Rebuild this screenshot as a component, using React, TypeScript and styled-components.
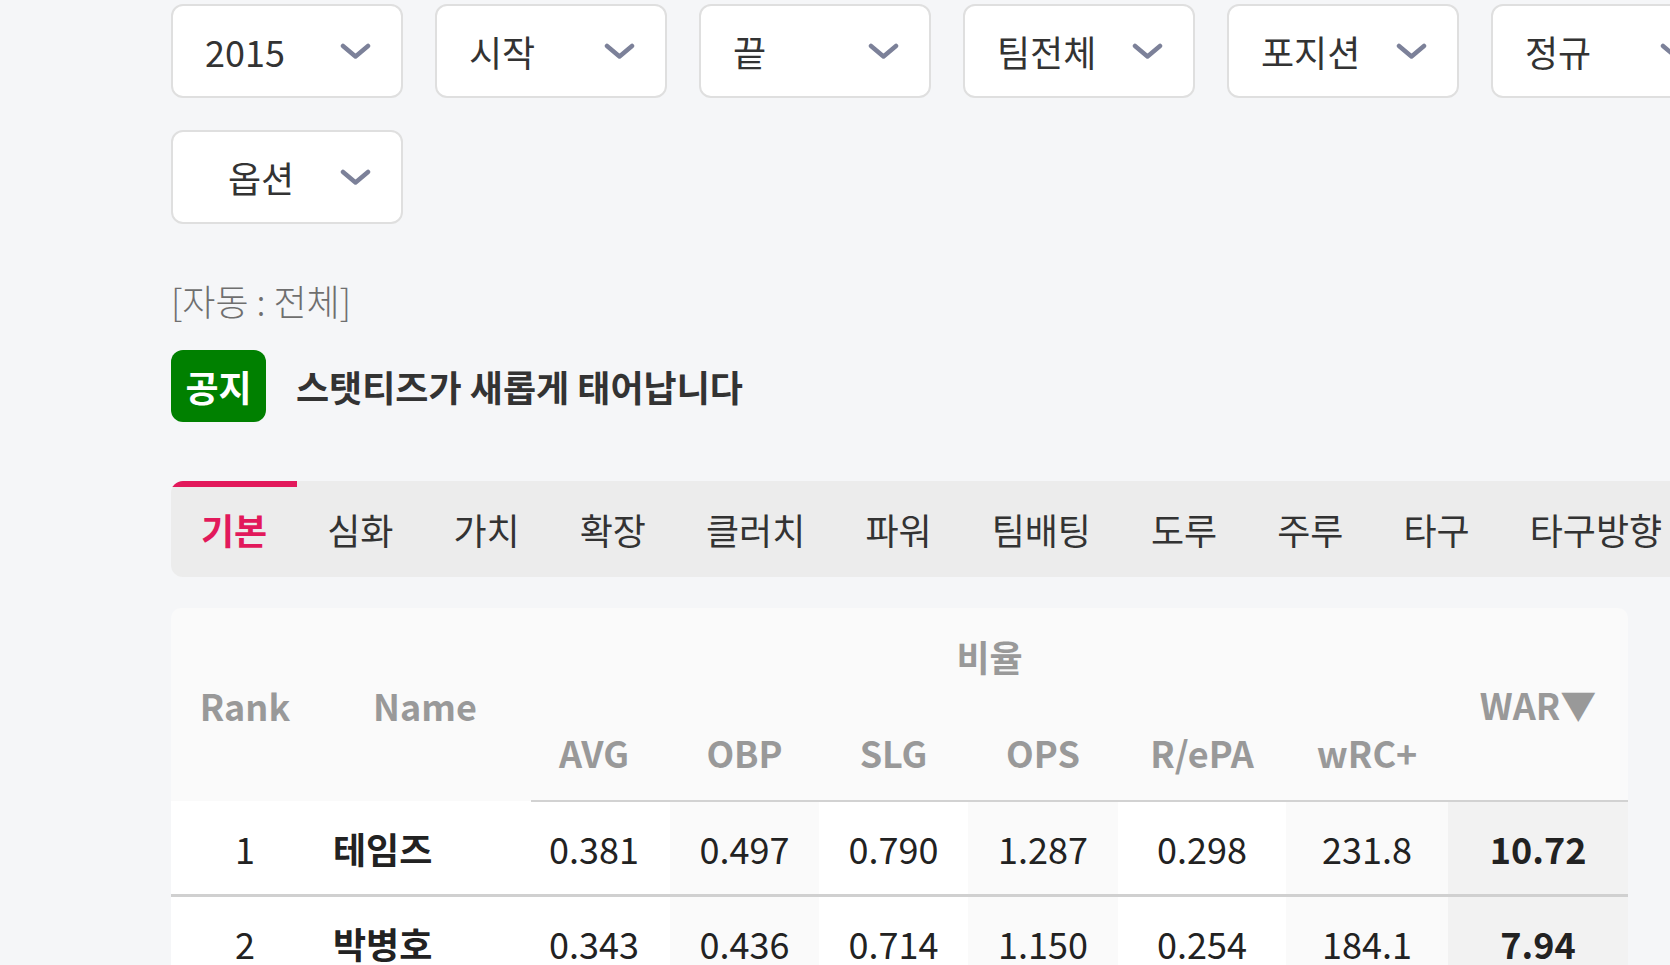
import React from "react";
import styled, { createGlobalStyle } from "styled-components";

const GlobalStyle = createGlobalStyle`
  html, body {
    margin: 0;
    padding: 0;
    background: #f5f6f8;
    overflow: hidden;
  }
  body {
    font-family: "Noto Sans CJK KR", "Noto Sans", sans-serif;
    color: #333;
  }
`;

const Page = styled.div`
  width: 1800px;
  padding: 4px 0 0 171px;
`;

const Filters = styled.div`
  display: flex;
  flex-wrap: wrap;
  gap: 32px;
  width: 1600px;
`;

const Select = styled.div<{ $indent?: number }>`
  box-sizing: border-box;
  width: 232px;
  height: 94px;
  display: flex;
  align-items: center;
  justify-content: space-between;
  padding: 0 30px 0 ${(p) => p.$indent ?? 32}px;
  background: #fff;
  border: 2px solid #dfdfdf;
  border-radius: 12px;
  font-size: 36px;
  color: #333;
`;

const Chevron = styled.svg`
  width: 31px;
  height: 17px;
  flex-shrink: 0;
`;

const AutoLabel = styled.div`
  margin-top: 56px;
  font-size: 36px;
  line-height: 40px;
  font-weight: 300;
  color: #6f6f6f;
`;

const Notice = styled.div`
  margin-top: 30px;
  display: flex;
  align-items: center;
  gap: 30px;
`;

const Badge = styled.span`
  width: 95px;
  height: 72px;
  display: flex;
  align-items: center;
  justify-content: center;
  background: #008000;
  border-radius: 12px;
  color: #fff;
  font-size: 36px;
  font-weight: 700;
`;

const NoticeText = styled.span`
  font-size: 36px;
  font-weight: 700;
  color: #333;
`;

const TabBar = styled.div`
  margin-top: 59px;
  width: 1600px;
  height: 96px;
  display: flex;
  background: #ececec;
  border-radius: 12px;
  overflow: hidden;
`;

const Tab = styled.div<{ $active?: boolean }>`
  box-sizing: border-box;
  padding: 0 30px 6px;
  display: flex;
  align-items: center;
  font-size: 36px;
  white-space: nowrap;
  font-weight: ${(p) => (p.$active ? 700 : 400)};
  color: ${(p) => (p.$active ? "#e2195b" : "#333")};
  border-top: 6px solid ${(p) => (p.$active ? "#e2195b" : "transparent")};
`;

const Card = styled.div`
  margin-top: 31px;
  width: 1457px;
  border-radius: 10px 10px 0 0;
  overflow: hidden;
`;

const Table = styled.table`
  width: 1457px;
  border-collapse: collapse;
  table-layout: fixed;
`;

const Head = styled.th<{ $line?: boolean; $shift?: boolean }>`
  height: 96px;
  padding: ${(p) => (p.$shift ? "0 13px 0 0" : "0")};
  background: #fafafa;
  color: #999;
  font-size: 36px;
  font-weight: 700;
  text-align: center;
  white-space: nowrap;
  border-bottom: ${(p) => (p.$line ? "2px solid #d2d2d2" : "none")};
`;

const Row = styled.tr`
  border-bottom: 3px solid #d0d0d0;
`;

const Cell = styled.td<{ $tone?: "plain" | "soft" | "war"; $bold?: boolean; $left?: boolean; $shift?: boolean }>`
  height: 92px;
  padding: ${(p) => (p.$left ? "0 0 0 14px" : p.$shift ? "0 13px 0 0" : "0")};
  font-size: 36px;
  color: #222;
  font-weight: ${(p) => (p.$bold ? 700 : 400)};
  text-align: ${(p) => (p.$left ? "left" : "center")};
  background: ${(p) =>
    p.$tone === "war" ? "#f2f2f2" : p.$tone === "soft" ? "#fafafa" : "#fff"};
`;

const filters = [
  { label: "2015" },
  { label: "시작" },
  { label: "끝" },
  { label: "팀전체" },
  { label: "포지션" },
  { label: "정규" },
  { label: "옵션", indent: 55 },
];

const tabs = ["기본", "심화", "가치", "확장", "클러치", "파워", "팀배팅", "도루", "주루", "타구", "타구방향"];

const widths = [148, 212, 139, 149, 149, 150, 168, 162, 180];
const rateCols = ["AVG", "OBP", "SLG", "OPS", "R/ePA", "wRC+"];

const players = [
  { rank: 1, name: "테임즈", stats: ["0.381", "0.497", "0.790", "1.287", "0.298", "231.8"], war: "10.72" },
  { rank: 2, name: "박병호", stats: ["0.343", "0.436", "0.714", "1.150", "0.254", "184.1"], war: "7.94" },
];

const ChevronIcon = () => (
  <Chevron viewBox="0 0 31 17">
    <path d="M3 3 L15.5 13.5 L28 3" fill="none" stroke="#7c8199" strokeWidth="4.5" strokeLinecap="round" strokeLinejoin="round" />
  </Chevron>
);

export default function App() {
  return (
    <>
      <GlobalStyle />
      <Page>
        <Filters>
          {filters.map((f) => (
            <Select key={f.label} $indent={f.indent}>
              <span>{f.label}</span>
              <ChevronIcon />
            </Select>
          ))}
        </Filters>

        <AutoLabel>[자동 : 전체]</AutoLabel>

        <Notice>
          <Badge>공지</Badge>
          <NoticeText>스탯티즈가 새롭게 태어납니다</NoticeText>
        </Notice>

        <TabBar>
          {tabs.map((t, i) => (
            <Tab key={t} $active={i === 0}>
              {t}
            </Tab>
          ))}
        </TabBar>

        <Card>
          <Table>
            <colgroup>
              {widths.map((w, i) => (
                <col key={i} style={{ width: w }} />
              ))}
            </colgroup>
            <thead>
              <tr>
                <Head rowSpan={2}>Rank</Head>
                <Head rowSpan={2}>Name</Head>
                <Head colSpan={6}>비율</Head>
                <Head rowSpan={2} $line>
                  WAR▼
                </Head>
              </tr>
              <tr>
                {rateCols.map((c, i) => (
                  <Head key={c} $line $shift={i === 0}>
                    {c}
                  </Head>
                ))}
              </tr>
            </thead>
            <tbody>
              {players.map((p) => (
                <Row key={p.rank}>
                  <Cell>{p.rank}</Cell>
                  <Cell $bold $left>
                    {p.name}
                  </Cell>
                  {p.stats.map((s, i) => (
                    <Cell key={i} $tone={i % 2 === 1 ? "soft" : "plain"} $shift={i === 0}>
                      {s}
                    </Cell>
                  ))}
                  <Cell $tone="war" $bold>
                    {p.war}
                  </Cell>
                </Row>
              ))}
            </tbody>
          </Table>
        </Card>
      </Page>
    </>
  );
}
